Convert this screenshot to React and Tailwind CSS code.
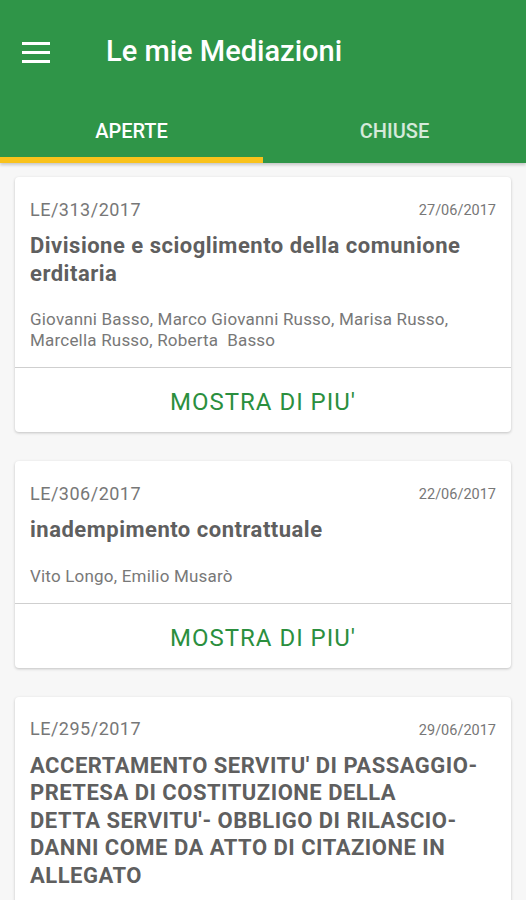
import React from 'react';

const cards = [
  {
    id: 'LE/313/2017',
    date: '27/06/2017',
    title: ['Divisione e scioglimento della comunione', 'erditaria'],
    names: ['Giovanni Basso, Marco Giovanni Russo, Marisa Russo,', 'Marcella Russo, Roberta\u00a0 Basso'],
  },
  {
    id: 'LE/306/2017',
    date: '22/06/2017',
    title: ['inadempimento contrattuale'],
    names: ['Vito Longo, Emilio Musarò'],
  },
  {
    id: 'LE/295/2017',
    date: '29/06/2017',
    title: [
      "ACCERTAMENTO SERVITU' DI PASSAGGIO-",
      'PRETESA DI COSTITUZIONE DELLA',
      "DETTA SERVITU'- OBBLIGO DI RILASCIO-",
      'DANNI COME DA ATTO DI CITAZIONE IN',
      'ALLEGATO',
    ],
    names: [],
  },
];

function Card({ card }) {
  return (
    <div className="bg-white rounded-[4px] shadow-[0_1px_3px_rgba(0,0,0,0.22)]">
      <div className="px-[15px] pt-[20px] pb-[16px]">
        <div className="flex items-center justify-between h-6">
          <span className="text-[18px] tracking-[0.5px] text-[#777777]">{card.id}</span>
          <span className="text-[14.5px] text-[#777777] mt-1">{card.date}</span>
        </div>
        <div className="mt-[11px] text-[22px] leading-[27.5px] tracking-[0.5px] font-bold text-[#5f5f5f]">
          {card.title.map((t, i) => (
            <div key={i}>{t}</div>
          ))}
        </div>
        {card.names.length > 0 && (
          <div className="mt-[22px] text-[17px] leading-[21px] tracking-[0.2px] text-[#787878]">
            {card.names.map((n, i) => (
              <div key={i}>{n}</div>
            ))}
          </div>
        )}
      </div>
      {card.names.length > 0 && (
        <div className="border-t border-[#cfcfcf] h-[65px] pt-1 flex items-center justify-center">
          <span className="text-[24px] tracking-[1px] text-[#2b8f3e]">MOSTRA DI PIU'</span>
        </div>
      )}
    </div>
  );
}

export default function App() {
  return (
    <div className="w-[526px] h-[900px] overflow-hidden bg-[#f7f7f7] font-['Roboto',sans-serif]">
      <div className="bg-[#2f9548] shadow-[0_2px_3px_rgba(0,0,0,0.2)] relative z-10">
        <div className="h-[104px] flex items-center">
          <div className="w-[106px] pl-[22px] flex flex-col gap-[6px]">
            <div className="w-[28px] h-[3px] bg-white" />
            <div className="w-[28px] h-[3px] bg-white" />
            <div className="w-[28px] h-[3px] bg-white" />
          </div>
          <h1 className="text-[29px] font-medium text-white">Le mie Mediazioni</h1>
        </div>
        <div className="flex h-[59px]">
          <div className="flex-1 flex flex-col">
            <div className="flex-1 flex items-center justify-center text-[20px] font-medium text-white">APERTE</div>
            <div className="h-[6px] bg-[#f9c21b]" />
          </div>
          <div className="flex-1 flex items-center justify-center pb-[6px] text-[20px] font-medium text-white/80">
            CHIUSE
          </div>
        </div>
      </div>
      <div className="px-[15px] pt-[14px] flex flex-col gap-[29px]">
        {cards.map((c) => (
          <Card key={c.id} card={c} />
        ))}
      </div>
    </div>
  );
}
